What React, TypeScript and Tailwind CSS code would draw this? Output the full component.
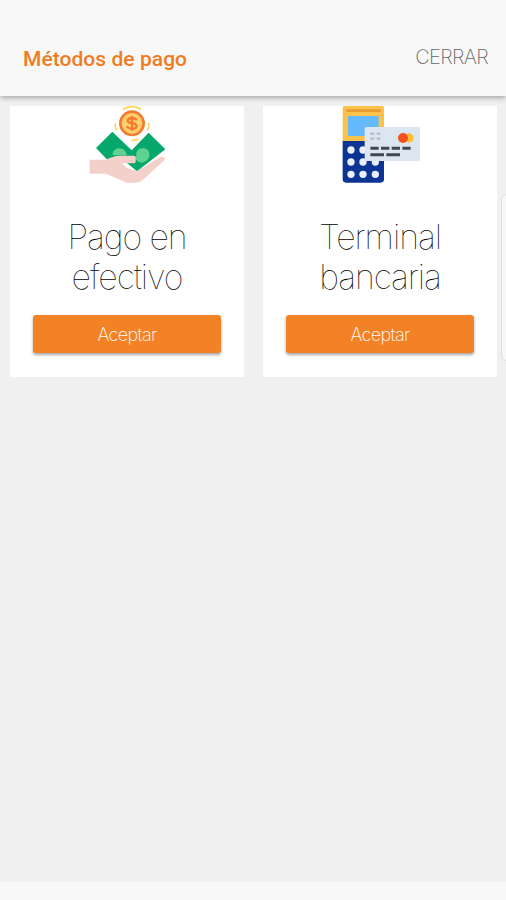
import { JSX } from "react";

interface PaymentMethod {
  id: string;
  lines: string[];
  icon: JSX.Element;
}

const CashIcon = (): JSX.Element => (
  <svg className="h-20 w-20" viewBox="22 24 240 240" fill="none">
    <path d="M98 101 L49 150 L83 185 L130 185 L172 220 L257 154 L207 104 L156 157 Z" fill="#06a76a" />
    <path d="M99 172 C97 144 139 144 141 172 Z" fill="#5fd190" />
    <path d="M170 174 C166 146 203 142 209 165 C212 181 199 193 187 194 C178 193 170 188 165 180 Z" fill="#5fd190" />
    <path
      d="M30 185 H78 C92 178 106 173 120 173 H163 Q168 173 168 178 V192 Q168 196 163 196 H127 L141 209 L172 219 L244 176 Q251 173 257 184 L192 244 Q180 255 166 254 H142 L79 227 H30 Z"
      fill="#f3d0c9"
    />
    <circle cx="157" cy="76" r="35" fill="#ffd06a" stroke="#f47b35" strokeWidth="8" />
    <path
      d="M171 67 C168 58 145 57 144 68 C144 80 172 71 171 85 C169 96 145 94 142 84 M157 54 V98"
      stroke="#f47b35"
      strokeWidth="7"
    />
    <path
      d="M131 33 Q157 19 183 33 M107 78 Q106 87 110 95 M207 77 Q208 87 204 96 M157 128 L174 124"
      stroke="#ffd45b"
      strokeWidth="5"
      strokeLinecap="round"
    />
  </svg>
);

const TerminalIcon = (): JSX.Element => (
  <svg className="h-20 w-20" viewBox="29 24 240 240" fill="none">
    <path d="M37 127 H161 V244 Q161 254 151 254 H47 Q37 254 37 244 Z" fill="#0b3493" />
    <path d="M37 129 V32 Q37 22 47 22 H151 Q161 22 161 32 V129 Z" fill="#fbc34c" />
    <path d="M51 38 H148" stroke="#e99c35" strokeWidth="8" strokeLinecap="round" />
    <rect x="53" y="54" width="92" height="60" fill="#65b9fb" />
    {[156, 192, 229].map((cy: number) =>
      [62, 98, 135].map((cx: number) => <circle key={`${cx}-${cy}`} cx={cx} cy={cy} r="11" fill="#e9f0fb" />)
    )}
    <rect x="103" y="87" width="166" height="102" rx="5" fill="#dce6f1" />
    <path d="M120 107 H132 M139 107 H150 M120 122 H132 M139 122 H150" stroke="#b4bdc9" strokeWidth="7" />
    <circle cx="236" cy="120" r="14" fill="#ffbd32" />
    <circle cx="218" cy="120" r="15" fill="#f5511e" />
    <path
      d="M120 151 H145 M152 151 H177 M184 151 H209 M216 151 H241 M120 170 H161 M168 170 H209"
      stroke="#414750"
      strokeWidth="9"
    />
  </svg>
);

const paymentMethods: PaymentMethod[] = [
  { id: "cash", lines: ["Pago en", "efectivo"], icon: <CashIcon /> },
  { id: "terminal", lines: ["Terminal", "bancaria"], icon: <TerminalIcon /> },
];

const PaymentCard = ({ method }: { method: PaymentMethod }): JSX.Element => (
  <div className="flex h-[271px] flex-1 flex-col items-center bg-white px-[23px]">
    {method.icon}
    <h2 className="mt-[31px] text-center font-['Inter',sans-serif] text-[34px] leading-10 font-thin tracking-[-1.1px] text-black">
      {method.lines.map((line: string) => (
        <span key={line} className="block whitespace-nowrap">
          {line}
        </span>
      ))}
    </h2>
    <button className="mt-[18px] h-[38px] w-full rounded-[3px] bg-[#f38226] font-['Inter',sans-serif] text-[18px] font-extralight tracking-[-0.6px] text-white shadow-[0_2px_3px_rgba(0,0,0,0.35)]">
      Aceptar
    </button>
  </div>
);

const App = (): JSX.Element => {
  return (
    <div className="relative flex h-[900px] w-[506px] flex-col overflow-hidden bg-[#f0f0f0]">
      <header className="z-10 flex h-24 shrink-0 items-start justify-between bg-[#f8f8f8] pr-[18px] pl-[23px] shadow-[0_1px_6px_rgba(0,0,0,0.4)]">
        <h1 className="mt-[47px] font-['Roboto',sans-serif] text-[21px] leading-6 font-medium tracking-[0.05px] text-[#f07c22]">
          Métodos de pago
        </h1>
        <button className="mt-[45px] font-['Inter',sans-serif] text-[20px] leading-6 font-extralight tracking-[-0.7px] text-[#666]">
          CERRAR
        </button>
      </header>

      <main className="flex flex-1 items-start gap-[19px] pt-[10px] pr-[9px] pl-[10px]">
        {paymentMethods.map((method: PaymentMethod) => (
          <PaymentCard key={method.id} method={method} />
        ))}
      </main>

      <footer className="h-[18px] shrink-0 bg-[#f8f8f8]" />

      {/* edge panel handle */}
      <div className="absolute top-[194px] -right-2 h-[167px] w-[13px] rounded-[6px] border border-[#dedede] bg-[#f7f7f7]" />
    </div>
  );
};

export default App;
